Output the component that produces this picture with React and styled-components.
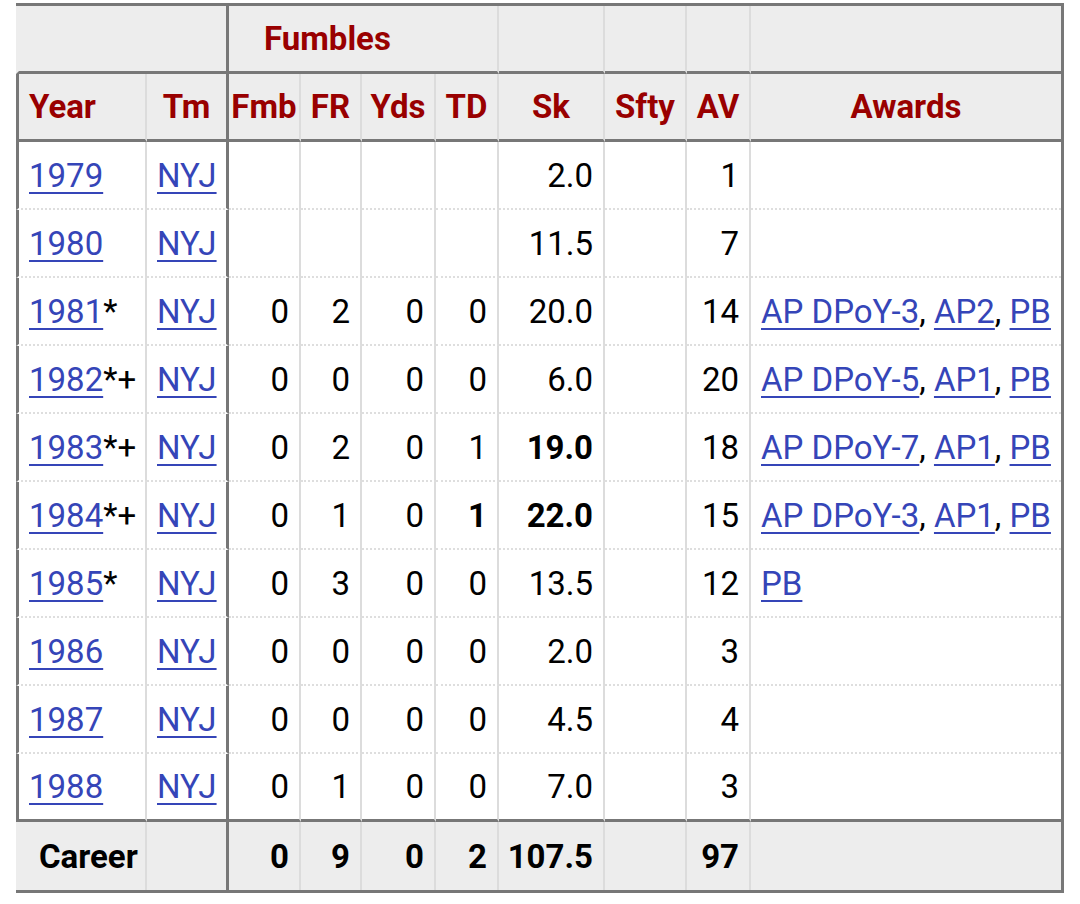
import React from 'react';
import styled, { createGlobalStyle } from 'styled-components';

const GlobalStyle = createGlobalStyle`
  body {
    margin: 0;
    background: #fff;
    font-family: Roboto, "Liberation Sans", sans-serif;
  }
`;

const Page = styled.div`
  padding: 3px 0 0 16px;
`;

const StatsGrid = styled.div`
  display: grid;
  grid-template-columns: 131px 82px 72px 61px 74px 63px 106px 82px 64px 310px;
  width: max-content;
  border-top: 3px solid #777;
  border-right: 3px solid #777;
  border-bottom: 3px solid #777;
  font-size: 33px;
  color: #000;
`;

const justify = { left: 'flex-start', center: 'center', right: 'flex-end' };

const dividers = {
  light: '2px solid #dcdcdc',
  dark: '3px solid #777',
  none: '0',
};

const Cell = styled.div`
  box-sizing: border-box;
  height: 68px;
  display: flex;
  align-items: center;
  justify-content: ${p => justify[p.$align || 'right']};
  padding: 0 10px;
  white-space: nowrap;
  border-right: ${p => dividers[p.$divider || 'light']};
  border-left: ${p => (p.$edge ? `3px solid ${p.$edge}` : '0')};
`;

const GroupCell = styled(Cell)`
  grid-column: span ${p => p.$span || 1};
  background: #ededed;
  border-bottom: 3px solid #777;
  color: #990000;
  font-weight: 700;
  padding-left: ${p => p.$indent || 10}px;
`;

const HeadCell = styled(Cell)`
  background: #ededed;
  border-bottom: 3px solid #777;
  color: #990000;
  font-weight: 700;
  padding: 0 ${p => (p.$align === 'left' ? '10px' : '0')};
`;

const DataCell = styled(Cell)`
  background: #fff;
  border-bottom: ${p => (p.$lastRow ? '3px solid #777' : '2px dotted #dedede')};
  font-weight: ${p => (p.$bold ? 700 : 400)};
`;

const TotalCell = styled(Cell)`
  background: #ededed;
  font-weight: 700;
  padding-left: ${p => (p.$label ? '20px' : '10px')};
`;

const StatLink = styled.a`
  color: #3545b8;
  text-decoration: underline;
  text-decoration-thickness: 2px;
  text-underline-offset: 5px;
`;

const Mark = styled.span`
  color: #000;
`;

const AwardList = styled.span`
  white-space: pre;
`;

const columns = [
  { key: 'year', head: 'Year', align: 'left' },
  { key: 'tm', head: 'Tm', align: 'left', headAlign: 'center', divider: 'dark' },
  { key: 'fmb', head: 'Fmb' },
  { key: 'fr', head: 'FR' },
  { key: 'yds', head: 'Yds' },
  { key: 'td', head: 'TD' },
  { key: 'sk', head: 'Sk' },
  { key: 'sfty', head: 'Sfty' },
  { key: 'av', head: 'AV' },
  { key: 'awards', head: 'Awards', align: 'left', headAlign: 'center', divider: 'none' },
];

const seasons = [
  { year: '1979', mark: '', sk: '2.0', av: '1', awards: [] },
  { year: '1980', mark: '', sk: '11.5', av: '7', awards: [] },
  { year: '1981', mark: '*', fmb: '0', fr: '2', yds: '0', td: '0', sk: '20.0', av: '14', awards: ['AP DPoY-3', 'AP2', 'PB'] },
  { year: '1982', mark: '*+', fmb: '0', fr: '0', yds: '0', td: '0', sk: '6.0', av: '20', awards: ['AP DPoY-5', 'AP1', 'PB'] },
  { year: '1983', mark: '*+', fmb: '0', fr: '2', yds: '0', td: '1', sk: '19.0', av: '18', awards: ['AP DPoY-7', 'AP1', 'PB'], bold: ['sk'] },
  { year: '1984', mark: '*+', fmb: '0', fr: '1', yds: '0', td: '1', sk: '22.0', av: '15', awards: ['AP DPoY-3', 'AP1', 'PB'], bold: ['td', 'sk'] },
  { year: '1985', mark: '*', fmb: '0', fr: '3', yds: '0', td: '0', sk: '13.5', av: '12', awards: ['PB'] },
  { year: '1986', mark: '', fmb: '0', fr: '0', yds: '0', td: '0', sk: '2.0', av: '3', awards: [] },
  { year: '1987', mark: '', fmb: '0', fr: '0', yds: '0', td: '0', sk: '4.5', av: '4', awards: [] },
  { year: '1988', mark: '', fmb: '0', fr: '1', yds: '0', td: '0', sk: '7.0', av: '3', awards: [] },
];

const career = { year: 'Career', tm: '', fmb: '0', fr: '9', yds: '0', td: '2', sk: '107.5', sfty: '', av: '97', awards: '' };

const renderValue = (col, row) => {
  if (col.key === 'year') {
    return (
      <span>
        <StatLink href="#">{row.year}</StatLink>
        {row.mark && <Mark>{row.mark}</Mark>}
      </span>
    );
  }
  if (col.key === 'tm') return <StatLink href="#">NYJ</StatLink>;
  if (col.key === 'awards') {
    return (
      <AwardList>
        {row.awards.map((a, i) => (
          <React.Fragment key={a + i}>
            {i > 0 && ', '}
            <StatLink href="#">{a}</StatLink>
          </React.Fragment>
        ))}
      </AwardList>
    );
  }
  return row[col.key] || '';
};

const App = () => (
  <Page>
    <GlobalStyle />
    <StatsGrid>
      <GroupCell $span={2} $divider="dark" $edge="#ededed" />
      <GroupCell $span={4} $indent={35} $align="left">Fumbles</GroupCell>
      <GroupCell />
      <GroupCell />
      <GroupCell />
      <GroupCell $divider="none" />

      {columns.map((col, i) => (
        <HeadCell
          key={col.key}
          $align={col.headAlign || (col.align === 'left' ? 'left' : 'center')}
          $divider={col.divider}
          $edge={i === 0 ? '#777' : null}
        >
          {col.head}
        </HeadCell>
      ))}

      {seasons.map((row, r) =>
        columns.map((col, i) => (
          <DataCell
            key={row.year + col.key}
            $align={col.align}
            $divider={col.divider}
            $edge={i === 0 ? '#777' : null}
            $lastRow={r === seasons.length - 1}
            $bold={row.bold && row.bold.includes(col.key)}
          >
            {renderValue(col, row)}
          </DataCell>
        ))
      )}

      {columns.map((col, i) => (
        <TotalCell
          key={'career' + col.key}
          $align={i === 0 ? 'left' : col.align}
          $label={i === 0}
          $divider={col.divider}
          $edge={i === 0 ? '#ededed' : null}
        >
          {career[col.key]}
        </TotalCell>
      ))}
    </StatsGrid>
  </Page>
);

export default App;
